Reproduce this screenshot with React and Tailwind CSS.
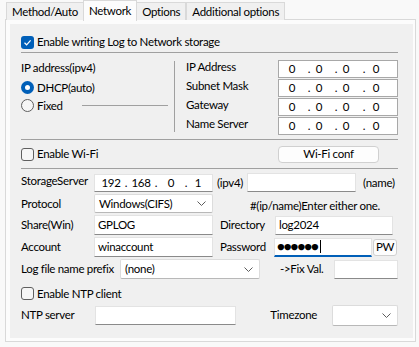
import React from "react";

function Tab({ children, selected }) {
  if (selected) {
    return (
      <div className="h-[21px] px-[5px] pt-[4px] border border-b-0 border-[#d9d9d9] bg-[#fcfcfc] -mx-px relative z-10 mb-[-1px]">
        {children}
      </div>
    );
  }
  return (
    <div className="h-[18px] px-[5px] pt-[3px] border border-b-0 border-[#d9d9d9] bg-[#f0f0f0]">
      {children}
    </div>
  );
}

function Check({ checked }) {
  if (checked) {
    return (
      <div className="w-[13px] h-[13px] rounded-[3px] bg-[#005fb8] flex items-center justify-center shrink-0">
        <svg width="9" height="9" viewBox="0 0 9 9">
          <path d="M1.5 4.8 L3.6 6.8 L7.6 2.4" fill="none" stroke="#fff" strokeWidth="1.2" />
        </svg>
      </div>
    );
  }
  return <div className="w-[13px] h-[13px] rounded-[3px] border border-[#5f5f5f] bg-[#f6f6f6] shrink-0" />;
}

function Radio({ checked }) {
  if (checked) {
    return (
      <div className="w-[13px] h-[13px] rounded-full bg-[#005fb8] flex items-center justify-center shrink-0">
        <div className="w-[5px] h-[5px] rounded-full bg-white" />
      </div>
    );
  }
  return <div className="w-[13px] h-[13px] rounded-full border border-[#5f5f5f] bg-[#f6f6f6] shrink-0" />;
}

function Chevron() {
  return (
    <svg width="9" height="5" viewBox="0 0 9 5" className="shrink-0">
      <path d="M0.5 0.5 L4.5 4.5 L8.5 0.5" fill="none" stroke="#5c5c5c" strokeWidth="1" />
    </svg>
  );
}

function TextBox({ className = "", children }) {
  return (
    <div className={"bg-white border border-[#e3e3e3] border-b-[#8a8a8a] flex items-center pl-[3px] " + className}>
      {children}
    </div>
  );
}

function Select({ className = "", children }) {
  return (
    <div className={"bg-white border border-[#dcdcdc] border-b-[#b8b8b8] rounded-[2px] flex items-center justify-between pl-[4px] pr-[6px] " + className}>
      <span>{children}</span>
      <Chevron />
    </div>
  );
}

function IpZero() {
  return (
    <div className="w-[120px] h-[18px] bg-white border border-[#a8a8a8] flex items-center">
      <span className="ml-[9px] w-[8px] text-center">0</span>
      <span className="ml-[11px] w-[4px] text-center">.</span>
      <span className="ml-[4px] w-[8px] text-center">0</span>
      <span className="ml-[11px] w-[4px] text-center">.</span>
      <span className="ml-[4px] w-[8px] text-center">0</span>
      <span className="ml-[12px] w-[4px] text-center">.</span>
      <span className="ml-[6px] w-[8px] text-center">0</span>
    </div>
  );
}

function Sep({ className = "" }) {
  return <div className={"h-px bg-[#a0a0a0] " + className} />;
}

export default function App() {
  return (
    <div className="w-[419px] h-[347px] bg-[#f9f9f9] text-[11.5px] tracking-[-0.3px] leading-none text-black font-['Lato',sans-serif] whitespace-nowrap overflow-hidden">
      <div className="flex items-end h-[20px] pl-[6px]">
        <Tab>Method/Auto</Tab>
        <Tab selected>Network</Tab>
        <Tab>Options</Tab>
        <Tab>Additional options</Tab>
      </div>
      <div className="ml-[5px] mr-[3px] h-[323px] -mt-px border border-[#d9d9d9] bg-[#fcfcfc] pt-[4px] pl-[4px] pr-[2px] pb-[3px]">
        <div className="bg-[#f0f0f0] h-full pl-[11px] pr-[15px] pt-[11px] flex flex-col">
          {/* enable writing */}
          <div className="flex items-center gap-[3px] h-[14px]">
            <Check checked />
            <span>Enable writing Log to Network storage</span>
          </div>
          <Sep className="mt-[3px]" />

          {/* IP section */}
          <div className="flex h-[86px]">
            <div className="w-[154px] flex flex-col pt-[9px]">
              <div className="h-[12px]">IP address(ipv4)</div>
              <div className="flex items-center gap-[3px] mt-[7px] h-[13px]">
                <Radio checked />
                <span>DHCP(auto)</span>
              </div>
              <div className="flex items-center gap-[3px] mt-[5px] h-[13px]">
                <Radio />
                <span>Fixed</span>
                <div className="ml-[16px] flex-1 h-px bg-[#a0a0a0] mr-[6px]" />
              </div>
            </div>
            <div className="w-px bg-[#a0a0a0] mt-[8px] mb-[7px]" />
            <div className="flex-1 pl-[11px] pt-[7px] flex flex-col gap-[1px]">
              {["IP Address", "Subnet Mask", "Gateway", "Name Server"].map((l) => (
                <div key={l} className="flex items-center h-[18px]">
                  <span className="w-[92px] -mt-[4px]">{l}</span>
                  <IpZero />
                </div>
              ))}
            </div>
          </div>
          <Sep />

          {/* wifi */}
          <div className="flex items-center h-[28px] justify-between">
            <div className="flex items-center gap-[3px]">
              <Check />
              <span>Enable Wi-Fi</span>
            </div>
            <div className="w-[101px] h-[17px] mr-[19px] rounded-[4px] border border-[#d0d0d0] bg-[#fdfdfd] flex items-center justify-center">
              Wi-Fi conf
            </div>
          </div>
          <Sep />

          {/* storage server */}
          <div className="flex items-center h-[19px] mt-[4px]">
            <span className="w-[73px] -mt-[4px]">StorageServer</span>
            <div className="w-[119px] h-[18px] bg-white border border-[#e3e3e3] border-b-[#8a8a8a] flex items-center">
              <span className="ml-[4px] w-[24px] text-center">192</span>
              <span className="w-[6px] text-center">.</span>
              <span className="w-[24px] text-center">168</span>
              <span className="w-[6px] text-center">.</span>
              <span className="w-[24px] text-center">0</span>
              <span className="w-[6px] text-center">.</span>
              <span className="w-[18px] text-center">1</span>
            </div>
            <span className="ml-[4px]">(ipv4)</span>
            <TextBox className="ml-[4px] w-[109px] h-[19px]" />
            <span className="ml-[7px]">(name)</span>
          </div>

          <div className="flex items-center h-[19px] mt-[2px]">
            <span className="w-[73px]">Protocol</span>
            <Select className="w-[119px] h-[19px]">Windows(CIFS)</Select>
            <span className="ml-[37px] mt-[4px]">#(ip/name)Enter either one.</span>
          </div>

          <div className="flex items-center h-[20px] mt-[2px]">
            <span className="w-[73px]">Share(Win)</span>
            <TextBox className="w-[119px] h-[20px]">GPLOG</TextBox>
            <span className="ml-[7px] w-[55px]">Directory</span>
            <TextBox className="w-[118px] h-[19px]">log2024</TextBox>
          </div>

          <div className="flex items-center h-[20px] mt-[2px]">
            <span className="w-[73px]">Account</span>
            <TextBox className="w-[119px] h-[20px]">winaccount</TextBox>
            <span className="ml-[7px] w-[54px]">Password</span>
            <div className="w-[98px] h-[19px] bg-white border border-[#e3e3e3] border-b-2 border-b-[#005fb8] flex items-center pl-[2px]">
              <span className="text-[13px] tracking-[-1px]">●●●●●●</span>
              <span className="ml-[2px] w-px h-[13px] bg-black" />
            </div>
            <div className="ml-[1px] w-[24px] h-[17px] rounded-[3px] border border-[#d0d0d0] bg-[#fdfdfd] flex items-center justify-center">
              PW
            </div>
          </div>

          <div className="flex items-center h-[20px] mt-[2px]">
            <span className="w-[99px]">Log file name prefix</span>
            <Select className="w-[140px] h-[20px]">(none)</Select>
            <span className="ml-[20px] w-[54px]">-&gt;Fix Val.</span>
            <TextBox className="w-[64px] h-[19px]" />
          </div>

          <div className="flex items-center gap-[3px] h-[13px] mt-[8px]">
            <Check />
            <span>Enable NTP client</span>
          </div>

          <div className="flex items-center h-[20px] mt-[5px]">
            <span className="w-[74px]">NTP server</span>
            <TextBox className="w-[142px] h-[19px]" />
            <span className="ml-[34px] w-[62px]">Timezone</span>
            <Select className="w-[66px] h-[21px]"></Select>
          </div>
        </div>
      </div>
    </div>
  );
}
